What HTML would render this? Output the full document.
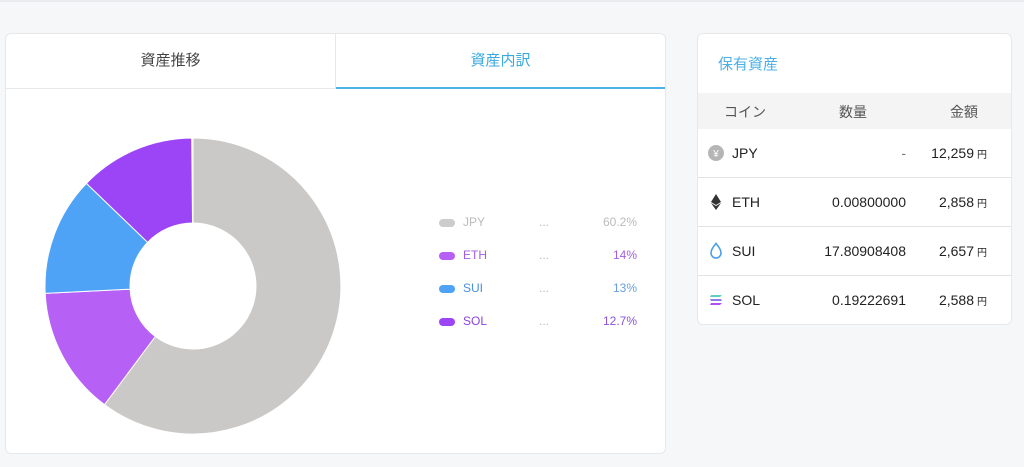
<!DOCTYPE html><html><head><meta charset="utf-8"><style>
body{margin:0;width:1024px;height:467px;background:#f5f7f8;font-family:"Liberation Sans","Noto Sans CJK JP",sans-serif;position:relative;overflow:hidden}
.top{position:absolute;left:0;top:0;width:1024px;height:2px;background:#e9ecee}
.card{position:absolute;background:#fff;border:1px solid #e6e8ea;border-radius:6px;overflow:hidden}
.tab{position:absolute;top:0;height:54px;line-height:54px;text-align:center;font-size:15px;color:#444}
.leg{position:absolute;left:438px;font-size:12px}
.leg i{position:absolute;left:0;top:4px;width:16px;height:8px;border-radius:4px}
.leg .n{position:absolute;left:24px;top:0}
.leg .d{position:absolute;left:100px;color:#bbb}
.leg .p{position:absolute;left:140px;width:58px;text-align:right}
.row{position:absolute;left:0;width:313px;height:48px;border-top:1px solid #e3e3e3;font-size:14px;color:#222}
.row span{position:absolute;top:16px}
.c1{left:34px}.c2{right:105px}.c3{right:24px}
.c3 small{font-size:10px;margin-left:3px}
.ic{position:absolute;left:9px;top:15px;width:18px;height:18px}
</style></head><body>
<div class="top"></div>
<div class="card" style="left:5px;top:33px;width:659px;height:419px">
 <div class="tab" style="left:0;width:329px;border-bottom:1px solid #e6e8ea;border-right:1px solid #e6e8ea">資産推移</div>
 <div class="tab" style="left:330px;width:329px;color:#3aa9e0;border-bottom:2px solid #4cb3e8;height:53px">資産内訳</div>
 <svg style="position:absolute;left:-5px;top:-33px" width="400" height="467">
  <path d="M192 137 A148 148 0 1 1 103.5 403.7 L154.3 335.5 A63 63 0 1 0 192 222 Z" fill="#cac9c7" stroke="#fff" stroke-width="1"/>
  <path d="M103.5 403.7 A148 148 0 0 1 44.2 292.4 L129.1 288.2 A63 63 0 0 0 154.3 335.5 Z" fill="#b660f5" stroke="#fff" stroke-width="1"/>
  <path d="M44.2 292.4 A148 148 0 0 1 85.4 182.4 L146.6 241.3 A63 63 0 0 0 129.1 288.2 Z" fill="#4ea3f6" stroke="#fff" stroke-width="1"/>
  <path d="M85.4 182.4 A148 148 0 0 1 190.7 137 L191.5 222 A63 63 0 0 0 146.6 241.3 Z" fill="#9c45f7" stroke="#fff" stroke-width="1"/>
 </svg>
 <div class="leg" style="top:181px;left:433px"><i style="background:#ccc"></i><span class="n" style="color:#bbb">JPY</span><span class="d">...</span><span class="p" style="color:#bbb">60.2%</span></div>
 <div class="leg" style="top:214px;left:433px"><i style="background:#b660f5"></i><span class="n" style="color:#a35ee0">ETH</span><span class="d">...</span><span class="p" style="color:#a35ee0">14%</span></div>
 <div class="leg" style="top:247px;left:433px"><i style="background:#4ea3f6"></i><span class="n" style="color:#4a8fe0">SUI</span><span class="d">...</span><span class="p" style="color:#6a9ee0">13%</span></div>
 <div class="leg" style="top:280px;left:433px"><i style="background:#9c45f7"></i><span class="n" style="color:#8a45e0">SOL</span><span class="d">...</span><span class="p" style="color:#8a55e0">12.7%</span></div>
</div>
<div class="card" style="left:697px;top:33px;width:313px;height:290px">
 <div style="position:absolute;left:20px;top:19px;font-size:15px;color:#4cb0e6">保有資産</div>
 <div style="position:absolute;left:0;top:59px;width:313px;height:36px;background:#f4f4f4;font-size:14px;color:#555">
  <span style="position:absolute;left:26px;top:9px">コイン</span>
  <span style="position:absolute;left:141px;top:9px">数量</span>
  <span style="position:absolute;left:252px;top:9px">金額</span>
 </div>
 <div class="row" style="top:95px;border-top:none"><svg class="ic" viewBox="0 0 18 18"><circle cx="9" cy="9" r="8" fill="#b5b5b5"/><text x="9" y="13" font-size="10" text-anchor="middle" fill="#fff" font-family="Liberation Sans">¥</text></svg><span class="c1">JPY</span><span class="c2" style="color:#777">-</span><span class="c3">12,259<small>円</small></span></div>
 <div class="row" style="top:143px"><svg class="ic" viewBox="0 0 18 18"><path d="M9 1 L14 9 L9 12 L4 9Z M4 10 L9 13 L14 10 L9 17Z" fill="#333"/></svg><span class="c1">ETH</span><span class="c2">0.00800000</span><span class="c3">2,858<small>円</small></span></div>
 <div class="row" style="top:192px"><svg class="ic" viewBox="0 0 18 18"><path d="M9 1.5 C11 4 14 7 14 11 A5 5 0 0 1 4 11 C4 7 7 4 9 1.5Z" fill="none" stroke="#4a9ee8" stroke-width="1.6"/></svg><span class="c1">SUI</span><span class="c2">17.80908408</span><span class="c3">2,657<small>円</small></span></div>
 <div class="row" style="top:241px"><svg class="ic" viewBox="0 0 18 18"><path d="M4 4h11l-2 2H3z" fill="#5fd0c0"/><path d="M3 8h11l1 2H4z" fill="#8a7de8"/><path d="M4 12h11l-2 2H3z" fill="#b050f0"/></svg><span class="c1">SOL</span><span class="c2">0.19222691</span><span class="c3">2,588<small>円</small></span></div>
</div>
</body></html>
